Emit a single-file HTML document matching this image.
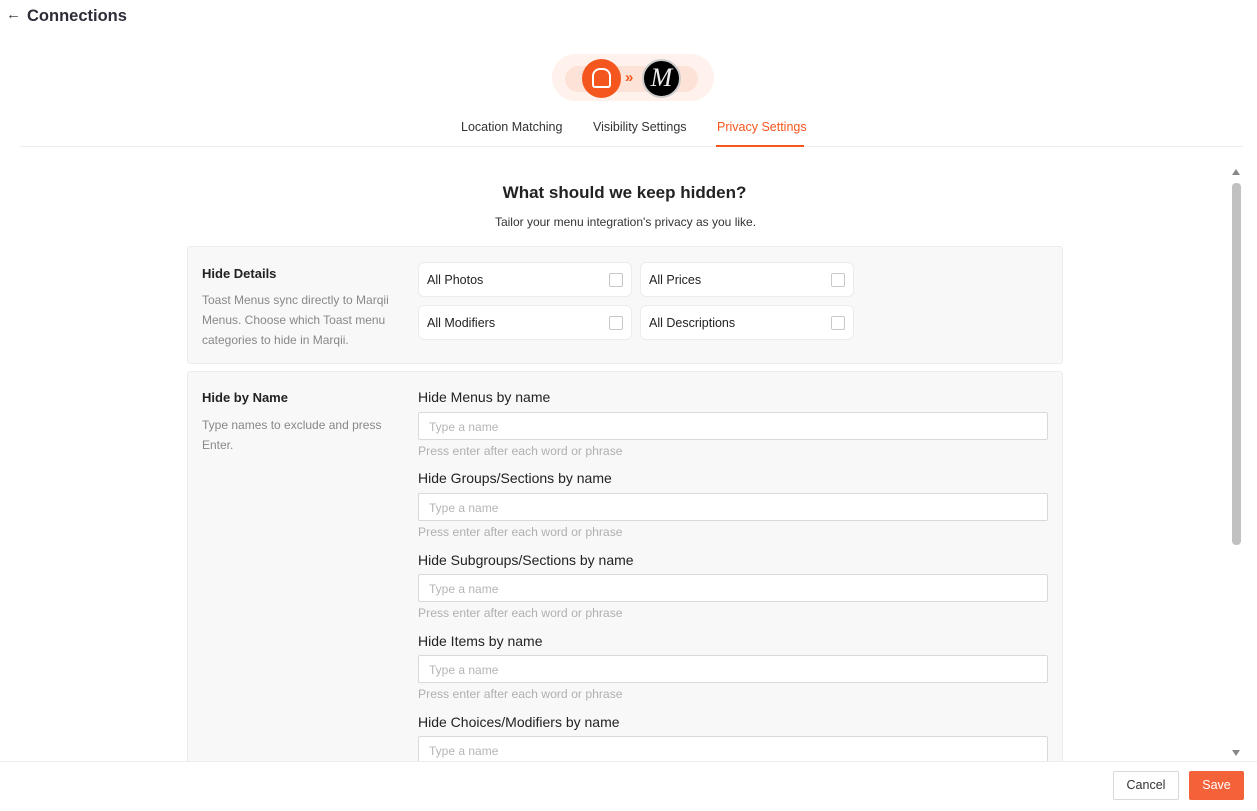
<!DOCTYPE html>
<html><head><meta charset="utf-8"><style>
*{box-sizing:border-box;margin:0;padding:0}
body{width:1257px;height:811px;overflow:hidden;background:#fff;font-family:"Liberation Sans",sans-serif;color:#222;position:relative}
.abs{position:absolute}
.cb{position:absolute;width:214px;height:35px;background:#fff;border:1px solid #ececec;border-radius:6px;font-size:12.5px;padding:10px 8px;color:#222}
.cb i{position:absolute;right:8px;top:10px;width:14px;height:14px;border:1px solid #c8c8c8;border-radius:2px;background:#fff}
.lbl{position:absolute;left:418px;font-size:14px;color:#222}
.inp{position:absolute;left:418px;width:630px;height:28px;border:1px solid #d9d9d9;border-radius:2px;background:#fff;font-size:12px;color:#b5b5b5;padding:7px 10px}
.hlp{position:absolute;left:418px;font-size:12.2px;color:#b0b0b0}
</style></head><body>
<div class="abs" style="left:6px;top:6px;font-size:15px;color:#444">&#8592;</div>
<div class="abs" style="left:27px;top:7px;font-size:16.5px;font-weight:bold;color:#2d2d3a">Connections</div>

<div class="abs" style="left:552px;top:54px;width:162px;height:47px;border-radius:24px;background:#fff2ec"></div>
<div class="abs" style="left:565px;top:66px;width:133px;height:26px;border-radius:13px;background:#fde2d8"></div>
<div class="abs" style="left:582px;top:59px;width:39px;height:39px;border-radius:50%;background:#f5561d"></div>
<div class="abs" style="left:592px;top:68px;width:19px;height:20px;border:2.5px solid #fff;border-radius:8px 8px 3px 3px"></div>
<div class="abs" style="left:625px;top:69px;font-size:15px;color:#f5561d;font-weight:bold">&#187;</div>
<div class="abs" style="left:642px;top:59px;width:39px;height:39px;border-radius:50%;background:#000;border:2px solid #ccc;color:#eee;font-family:'Liberation Serif',serif;font-style:italic;font-size:26px;text-align:center;line-height:33px">M</div>

<div class="abs" style="left:461px;top:120px;font-size:12.5px;color:#333">Location Matching</div>
<div class="abs" style="left:593px;top:120px;font-size:12.5px;color:#333">Visibility Settings</div>
<div class="abs" style="left:717px;top:120px;font-size:12.5px;color:#f5561d">Privacy Settings</div>
<div class="abs" style="left:20px;top:146px;width:1223px;height:1px;background:#ececec"></div>
<div class="abs" style="left:716px;top:145px;width:88px;height:2px;background:#f5561d"></div>

<div class="abs" style="left:0;top:183px;width:1257px;text-align:center;font-size:17px;font-weight:bold;color:#222;padding-right:8px">What should we keep hidden?</div>
<div class="abs" style="left:0;top:215px;width:1257px;text-align:center;font-size:12px;color:#333;padding-right:6px">Tailor your menu integration's privacy as you like.</div>

<div class="abs" style="left:187px;top:246px;width:876px;height:118px;background:#f8f8f8;border:1px solid #ececec;border-radius:3px"></div>
<div class="abs" style="left:202px;top:266px;font-size:13px;font-weight:bold">Hide Details</div>
<div class="abs" style="left:202px;top:290px;width:200px;font-size:12px;color:#888;line-height:20px">Toast Menus sync directly to Marqii Menus. Choose which Toast menu categories to hide in Marqii.</div>
<div class="cb" style="left:418px;top:262px">All Photos<i></i></div>
<div class="cb" style="left:640px;top:262px">All Prices<i></i></div>
<div class="cb" style="left:418px;top:305px">All Modifiers<i></i></div>
<div class="cb" style="left:640px;top:305px">All Descriptions<i></i></div>

<div class="abs" style="left:187px;top:371px;width:876px;height:420px;background:#f8f8f8;border:1px solid #ececec;border-radius:3px"></div>
<div class="abs" style="left:202px;top:390px;font-size:13px;font-weight:bold">Hide by Name</div>
<div class="abs" style="left:202px;top:415px;width:200px;font-size:12px;color:#888;line-height:20px">Type names to exclude and press Enter.</div>

<div class="lbl" style="top:389px">Hide Menus by name</div>
<div class="inp" style="top:412px">Type a name</div>
<div class="hlp" style="top:444px">Press enter after each word or phrase</div>
<div class="lbl" style="top:470px">Hide Groups/Sections by name</div>
<div class="inp" style="top:493px">Type a name</div>
<div class="hlp" style="top:525px">Press enter after each word or phrase</div>
<div class="lbl" style="top:552px">Hide Subgroups/Sections by name</div>
<div class="inp" style="top:574px">Type a name</div>
<div class="hlp" style="top:606px">Press enter after each word or phrase</div>
<div class="lbl" style="top:633px">Hide Items by name</div>
<div class="inp" style="top:655px">Type a name</div>
<div class="hlp" style="top:687px">Press enter after each word or phrase</div>
<div class="lbl" style="top:714px">Hide Choices/Modifiers by name</div>
<div class="inp" style="top:736px">Type a name</div>

<div class="abs" style="left:1232px;top:169px;width:0;height:0;border-left:4px solid transparent;border-right:4px solid transparent;border-bottom:6px solid #888"></div>
<div class="abs" style="left:1232px;top:183px;width:9px;height:362px;border-radius:4px;background:#c1c1c1"></div>
<div class="abs" style="left:1232px;top:750px;width:0;height:0;border-left:4px solid transparent;border-right:4px solid transparent;border-top:6px solid #888"></div>

<div class="abs" style="left:0;top:761px;width:1257px;height:50px;background:#fff;border-top:1px solid #ececec"></div>
<div class="abs" style="left:1113px;top:771px;width:66px;height:29px;border:1px solid #d9d9d9;border-radius:2px;font-size:12.5px;text-align:center;line-height:27px;color:#333">Cancel</div>
<div class="abs" style="left:1189px;top:771px;width:55px;height:29px;background:#f4623a;border-radius:2px;font-size:12.5px;text-align:center;line-height:29px;color:#fff">Save</div>
</body></html>
